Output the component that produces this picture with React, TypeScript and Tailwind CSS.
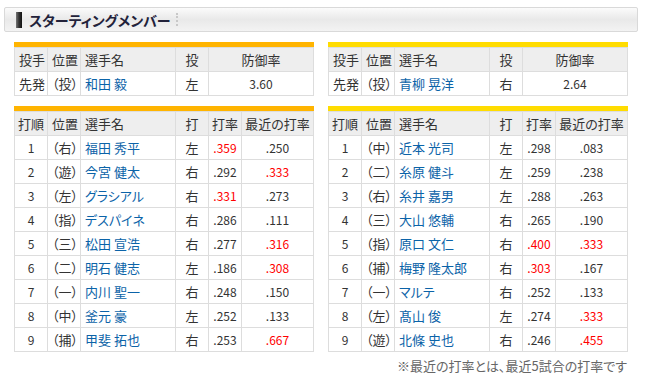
import React from "react";

type Batter = [string, string, string, string, string, string];

const leftPitcher = ["先発", "（投）", "和田 毅", "左", "3.60"];
const rightPitcher = ["先発", "（投）", "青柳 晃洋", "右", "2.64"];

const leftBatters: Batter[] = [
  ["1", "（右）", "福田 秀平", "左", ".359", ".250"],
  ["2", "（遊）", "今宮 健太", "右", ".292", ".333"],
  ["3", "（左）", "グラシアル", "右", ".331", ".273"],
  ["4", "（指）", "デスパイネ", "右", ".286", ".111"],
  ["5", "（三）", "松田 宣浩", "右", ".277", ".316"],
  ["6", "（二）", "明石 健志", "左", ".186", ".308"],
  ["7", "（一）", "内川 聖一", "右", ".248", ".150"],
  ["8", "（中）", "釜元 豪", "左", ".252", ".133"],
  ["9", "（捕）", "甲斐 拓也", "右", ".253", ".667"],
];

const rightBatters: Batter[] = [
  ["1", "（中）", "近本 光司", "左", ".298", ".083"],
  ["2", "（二）", "糸原 健斗", "左", ".259", ".238"],
  ["3", "（右）", "糸井 嘉男", "左", ".288", ".263"],
  ["4", "（三）", "大山 悠輔", "右", ".265", ".190"],
  ["5", "（指）", "原口 文仁", "右", ".400", ".333"],
  ["6", "（捕）", "梅野 隆太郎", "右", ".303", ".167"],
  ["7", "（一）", "マルテ", "右", ".252", ".133"],
  ["8", "（左）", "髙山 俊", "左", ".274", ".333"],
  ["9", "（遊）", "北條 史也", "右", ".246", ".455"],
];

// .300以上は赤
const avgColor = (v: string) => (parseFloat(v) >= 0.3 ? "text-[#ff0000]" : "text-[#333]");

function Cell({ children, center, className = "" }: { children: React.ReactNode; center?: boolean; className?: string }) {
  return (
    <div
      className={
        "flex h-6 items-center overflow-hidden whitespace-nowrap border-r border-b border-[#dddddd] " +
        (center ? "justify-center " : "pl-[4px] ") +
        className
      }
    >
      {children}
    </div>
  );
}

function PitcherTable({ bar, row }: { bar: string; row: string[] }) {
  return (
    <div>
      <div className={"h-[5px] " + bar} />
      <div className="border-t border-l border-[#dddddd]">
        <div className="grid grid-cols-[33px_33px_95px_33px_105px] bg-[#eeeeee]">
          <Cell>投手</Cell>
          <Cell>位置</Cell>
          <Cell>選手名</Cell>
          <Cell center>投</Cell>
          <Cell center>防御率</Cell>
        </div>
        <div className="grid grid-cols-[33px_33px_95px_33px_105px] bg-white">
          <Cell>{row[0]}</Cell>
          <Cell className="pl-[2px]">{row[1]}</Cell>
          <Cell className="text-[#0b63a8]">{row[2]}</Cell>
          <Cell center>{row[3]}</Cell>
          <Cell center className="text-[12px]">{row[4]}</Cell>
        </div>
      </div>
    </div>
  );
}

function BattingTable({ bar, rows }: { bar: string; rows: Batter[] }) {
  return (
    <div>
      <div className={"h-[5px] " + bar} />
      <div className="border-t border-l border-[#dddddd]">
        <div className="grid grid-cols-[33px_33px_95px_33px_33px_72px] bg-[#eeeeee]">
          <Cell center>打順</Cell>
          <Cell>位置</Cell>
          <Cell>選手名</Cell>
          <Cell center>打</Cell>
          <Cell center>打率</Cell>
          <Cell center>最近の打率</Cell>
        </div>
        {rows.map((r) => (
          <div key={r[0]} className="grid grid-cols-[33px_33px_95px_33px_33px_72px] bg-white">
            <Cell center className="text-[12px]">{r[0]}</Cell>
            <Cell className="pl-[2px]">{r[1]}</Cell>
            <Cell className="text-[#0b63a8]">{r[2]}</Cell>
            <Cell center>{r[3]}</Cell>
            <Cell center className={"text-[12px] " + avgColor(r[4])}>{r[4]}</Cell>
            <Cell center className={"text-[12px] " + avgColor(r[5])}>{r[5]}</Cell>
          </div>
        ))}
      </div>
    </div>
  );
}

export default function App() {
  return (
    <div className="h-[382px] w-[645px] bg-white pt-[7px] font-['Noto_Sans_CJK_JP',sans-serif] text-[13px] leading-none text-[#333] [font-feature-settings:'palt']">
      <div className="mx-[4px] flex h-[25px] w-[634px] items-center rounded-[2px] border border-[#d9d9d9] bg-gradient-to-b from-[#fbfbfb] via-[#e9e9e9] to-[#f3f3f3] pl-[11px]">
        <span className="h-[16px] w-[6px] bg-gradient-to-r from-[#777] via-[#333] to-[#111]" />
        <span className="ml-[7px] text-[14px] font-bold text-[#22223a]">スターティングメンバー</span>
        <span className="ml-[5px] h-[13px] border-l-2 border-dotted border-[#c8c8c8]" />
      </div>

      <div className="mt-[10px] flex gap-[14px] pl-[14px]">
        <div className="flex w-[300px] flex-col gap-[10px]">
          <PitcherTable bar="bg-[#ffb400]" row={leftPitcher} />
          <BattingTable bar="bg-[#ffb400]" rows={leftBatters} />
        </div>
        <div className="flex w-[300px] flex-col gap-[10px]">
          <PitcherTable bar="bg-[#ffdc00]" row={rightPitcher} />
          <BattingTable bar="bg-[#ffdc00]" rows={rightBatters} />
          <p className="-mt-[4px] pr-[1px] text-right text-[13px] leading-4 text-[#666]">
            ※最近の打率とは、最近5試合の打率です
          </p>
        </div>
      </div>
    </div>
  );
}
